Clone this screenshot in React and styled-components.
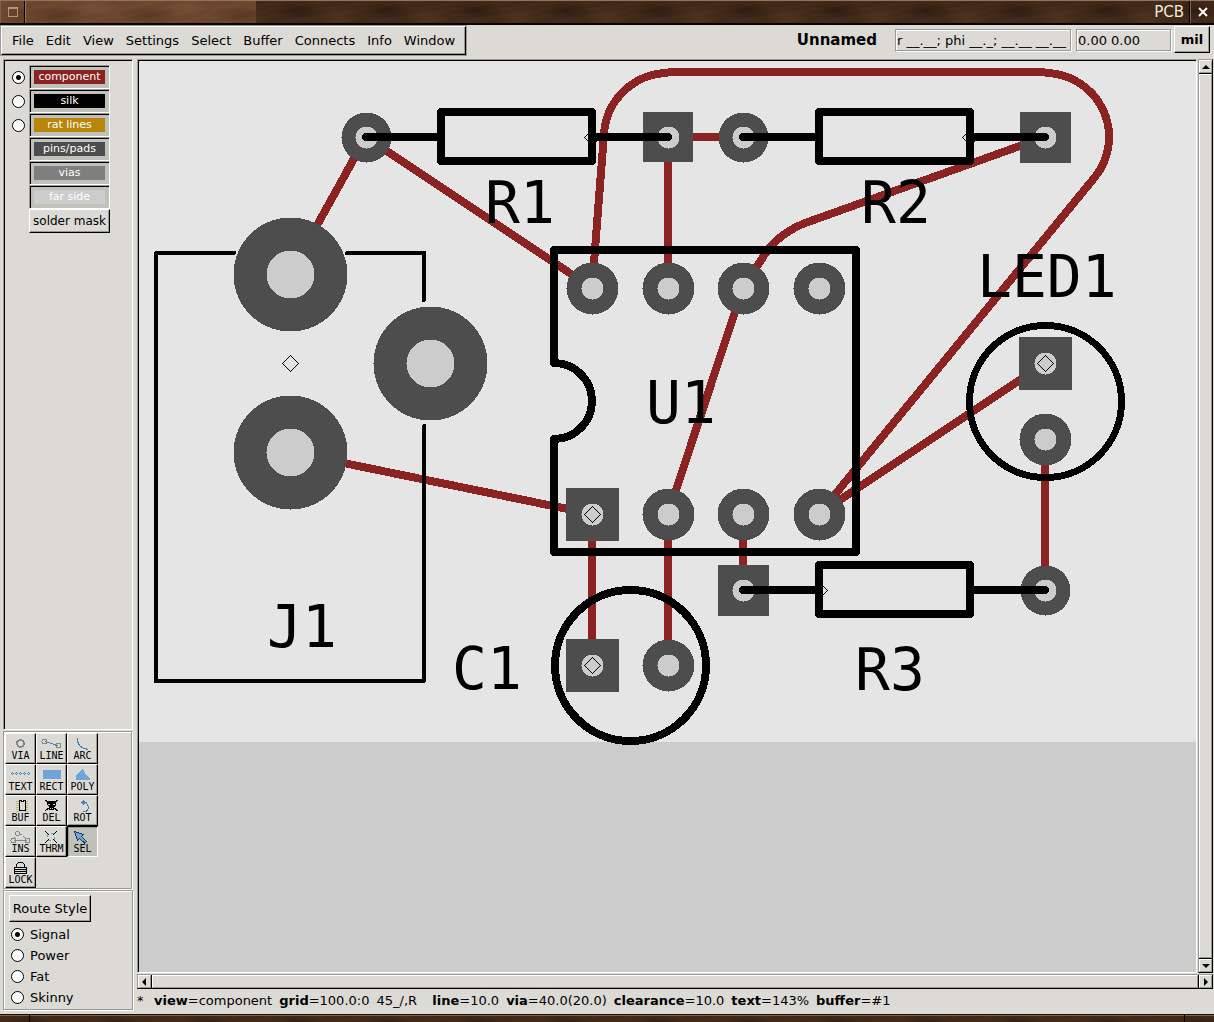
import React, { useState } from "react";
import styled, { createGlobalStyle, css } from "styled-components";

const face = "#dbdad5";
const shade = "#9a9992";
const copper = "#8b2323";
const pad = "#4d4d4d";
const hole = "#cccccc";

const GlobalStyle = createGlobalStyle`
  * { box-sizing: border-box; }
  body { margin: 0; background: ${face}; }
  button, input, output { font: inherit; color: inherit; }
`;

const raised = css`
  border: 1px solid;
  border-color: #fff #000 #000 #fff;
  box-shadow: inset -1px -1px 0 ${shade};
  background: ${face};
`;

const etched = css`
  border: 1px solid ${shade};
  box-shadow: inset 1px 1px 0 #fff, 1px 1px 0 #fff;
`;

const Window = styled.div`
  display: flex;
  flex-direction: column;
  height: 100vh;
  min-height: 640px;
  background: ${face};
  color: #000;
  font: 13px/16px "DejaVu Sans", sans-serif;
`;

const woodDark = css`
  background-color: #402919;
  background-image:
    radial-gradient(ellipse 26px 9px at 30% 40%, rgba(18, 9, 5, 0.4), transparent),
    radial-gradient(ellipse 22px 12px at 75% 70%, rgba(105, 66, 36, 0.35), transparent),
    repeating-linear-gradient(172deg, rgba(90, 56, 30, 0.15) 0 2px, transparent 3px 7px);
  background-size: 90px 24px;
`;

const woodLight = css`
  background-color: #6b452e;
  background-image:
    radial-gradient(ellipse 30px 10px at 35% 60%, rgba(54, 30, 18, 0.35), transparent),
    radial-gradient(ellipse 24px 9px at 75% 30%, rgba(140, 98, 66, 0.3), transparent),
    repeating-linear-gradient(168deg, rgba(130, 88, 58, 0.15) 0 2px, transparent 3px 8px);
  background-size: 92px 24px;
`;

const TitleBar = styled.header`
  display: flex;
  flex: none;
  height: 25px;
  border-top: 1px solid #94735a;
  border-bottom: 2px solid #080403;
  ${woodDark}
`;

const TitleButton = styled.button`
  display: grid;
  place-items: center;
  width: 24px;
  padding: 0;
  border: 0;
  border-left: 1px solid #80604a;
  ${(p) => (p.$light ? woodLight : "background: transparent;")}
`;

const TitleGrip = styled.div`
  width: 232px;
  border-left: 1px solid #000;
  box-shadow: inset 1px 0 0 #94735a;
  ${woodLight}
`;

const TitleText = styled.h1`
  flex: 1;
  margin: 0;
  padding-right: 5px;
  border-right: 1px solid #000;
  color: #f4e6d8;
  font-size: 15px;
  font-weight: 400;
  line-height: 23px;
  text-align: right;
`;

const Header = styled.div`
  display: flex;
  flex: none;
  align-items: flex-start;
  height: 34px;
  padding: 1px 4px 0 1px;
`;

const MenuBar = styled.nav`
  display: flex;
  flex: none;
  height: 29px;
  padding: 0 4px;
  ${raised}
  outline: 1px solid ${shade};
`;

const MenuItem = styled.button`
  padding: 0 6px;
  border: 0;
  background: transparent;
`;

const BoardName = styled.h2`
  flex: 1;
  margin: 0;
  padding-right: 14px;
  font-size: 15px;
  font-weight: 700;
  line-height: 29px;
  text-align: right;
`;

const Readout = styled.output`
  width: ${(p) => p.$width}px;
  height: 23px;
  margin: 3px 0 0 4px;
  padding: 0 1px;
  overflow: hidden;
  white-space: nowrap;
  line-height: 21px;
  border: 1px solid;
  border-color: ${shade} #fff #fff ${shade};
  box-shadow: inset -1px -1px 0 ${shade}, inset 1px 1px 0 #fff;
`;

const UnitButton = styled.button`
  width: 36px;
  height: 27px;
  margin-left: 2px;
  padding: 0;
  font-weight: 700;
  ${raised}
`;

const Body = styled.div`
  display: flex;
  flex: 1;
  min-height: 0;
`;

const Side = styled.aside`
  display: flex;
  flex: none;
  flex-direction: column;
  gap: 1px;
  width: 137px;
  padding: 0 4px 4px 3px;
`;

const LayerPanel = styled.section`
  display: flex;
  flex: 1;
  flex-direction: column;
  min-height: 0;
  padding: 5px 8px;
  border: 1px solid;
  border-color: ${shade} #fff #fff ${shade};
  box-shadow: inset 1px 1px 0 #000;
`;

const LayerRow = styled.div`
  display: flex;
  align-items: center;
  gap: 4px;
  height: 24px;
  padding-left: ${(p) => (p.$bare ? 17 : 0)}px;
`;

const Radio = styled.input.attrs({ type: "radio" })`
  appearance: none;
  flex: none;
  width: 13px;
  height: 13px;
  margin: 0;
  border: 1px solid #000;
  border-radius: 50%;
  background: #fff;
  &:checked {
    background: radial-gradient(circle, #000 0 2px, #fff 3px);
  }
`;

const LayerButton = styled.button`
  width: 81px;
  height: 24px;
  padding: 4px;
  border: 1px solid;
  border-color: ${shade} #fff #fff ${shade};
  box-shadow: inset 1px 1px 0 #000;
  background: #c1c1bb;
  font-size: 11px;
`;

const Swatch = styled.span`
  display: block;
  height: 14px;
  line-height: 14px;
  color: #fff;
  background: ${(p) => p.$color};
`;

const MaskButton = styled.button`
  width: 81px;
  height: 24px;
  padding: 0;
  font-size: 12px;
  white-space: nowrap;
  ${raised}
`;

const ToolPanel = styled.section`
  display: grid;
  flex: none;
  grid-template-columns: repeat(3, 31px);
  grid-auto-rows: 31px;
  width: 129px;
  padding: 1px 1px 0;
  ${etched}
`;

const ToolButton = styled.button`
  display: flex;
  flex-direction: column;
  align-items: center;
  padding: 1px 0 0;
  font: 10px/10px "DejaVu Sans Mono", monospace;
  ${raised}
  ${(p) =>
    p.$active &&
    css`
      border-color: #000 #fff #fff #000;
      box-shadow: inset 1px 1px 0 ${shade};
      background: #c1c1bb;
    `}
`;

const ToolIcon = styled.svg`
  display: block;
  flex: none;
  width: 29px;
  height: 16px;
  overflow: visible;
  fill: none;
  shape-rendering: crispEdges;
`;

const RoutePanel = styled.section`
  flex: none;
  padding: 4px 5px 1px;
  ${etched}
`;

const RouteButton = styled.button`
  display: block;
  width: 82px;
  height: 27px;
  margin-bottom: 2px;
  padding: 0;
  white-space: nowrap;
  ${raised}
`;

const RouteOption = styled.label`
  display: flex;
  align-items: center;
  gap: 6px;
  height: 21px;
  padding-left: 2px;
`;

const Main = styled.main`
  display: flex;
  flex: 1;
  flex-direction: column;
  min-width: 0;
`;

const View = styled.div`
  display: grid;
  flex: 1;
  grid-template: minmax(0, 1fr) 15px / minmax(0, 1fr) 15px;
  gap: 1px;
  min-height: 0;
  padding-right: 1px;
`;

const Canvas = styled.div`
  overflow: hidden;
  min-height: 0;
  border: 1px solid;
  border-color: ${shade} #fff #fff ${shade};
  box-shadow: inset 1px 1px 0 #000;
  padding: 1px 0 0 1px;
`;

const Board = styled.svg`
  display: block;
  width: 100%;
  height: 100%;
  background: ${hole};
  shape-rendering: crispEdges;
`;

const SilkText = styled.text`
  font: 58px "DejaVu Sans Mono", monospace;
  fill: #000;
`;

const ScrollTrack = styled.div`
  display: flex;
  flex-direction: ${(p) => (p.$vertical ? "column" : "row")};
  grid-column: ${(p) => (p.$vertical ? "auto" : "1 / -1")};
  border: 1px solid;
  border-color: ${shade} #000 #000 ${shade};
`;

const ScrollArrow = styled.button`
  display: grid;
  flex: none;
  place-items: center;
  width: 13px;
  height: 13px;
  padding: 0;
  ${raised}
  border-right-color: ${shade};
  border-bottom-color: ${shade};
  box-shadow: none;
`;

const ScrollThumb = styled.div`
  flex: 1;
  border: 1px solid;
  border-color: #fff ${shade} ${shade} #fff;
  margin: ${(p) => (p.$vertical ? "1px 0" : "0 1px")};
  outline: 1px solid #000;
  clip-path: ${(p) => (p.$vertical ? "inset(-1px 0)" : "inset(0 -1px)")};
`;

const StatusBar = styled.footer`
  display: flex;
  flex: none;
  gap: 7px;
  height: 25px;
  padding-bottom: 2px;
  align-items: center;
  white-space: pre;
`;

const StatusMark = styled.span`
  width: 10px;
`;

const Frame = styled.div`
  display: flex;
  flex: none;
  justify-content: space-between;
  height: 8px;
  border-top: 1px solid #1c0d08;
  box-shadow: inset 0 1px 0 #80604a;
  ${woodDark}
`;

const FrameCorner = styled.div`
  width: 30px;
  border: solid #000;
  border-width: 0 ${(p) => (p.$left ? 1 : 0)}px 0 ${(p) => (p.$left ? 0 : 1)}px;
`;

const menus = ["File", "Edit", "View", "Settings", "Select", "Buffer", "Connects", "Info", "Window"];

const layers = [
  { name: "component", color: "#8b2323", radio: true },
  { name: "silk", color: "#000000", radio: true },
  { name: "rat lines", color: "#b8860b", radio: true },
  { name: "pins/pads", color: "#4d4d4d" },
  { name: "vias", color: "#7f7f7f" },
  { name: "far side", color: "#cccccc" },
];

const blue = "#3f80bb";
const sky = "#6fa5d9";
const grey = "#7e8a87";

const tools = [
  ["VIA", <circle key="i" cx="14.5" cy="8.5" r="3.5" stroke={grey} strokeWidth="2" />],
  [
    "LINE",
    <g key="i">
      <circle cx="7.5" cy="6.5" r="2.5" stroke={grey} />
      <circle cx="21.5" cy="10.5" r="2.5" stroke={grey} />
      <path d="M8 6.5L21 10.5" stroke={blue} />
    </g>,
  ],
  ["ARC", <path key="i" d="M9.5 3v3q1 7 11 8.500" stroke={blue} />],
  [
    "TEXT",
    <g key="i" fill={blue}>
      {[6, 10, 14, 18, 22].map((x) => (
        <path key={x} d={`M${x} 6h1v1h-1zM${x - 1} 7h1v1h-1zM${x + 1} 7h1v1h-1zM${x} 8h1v1h-1z`} />
      ))}
    </g>,
  ],
  ["RECT", <rect key="i" x="6" y="4" width="18" height="9" fill={sky} />],
  ["POLY", <path key="i" d="M8 10L14 3H15L17 7L18 9L22 13V14H8Z" fill={sky} />],
  [
    "BUF",
    <g key="i">
      <path d="M11.500 4v11M20.500 4v11" stroke="#c9b47e" strokeDasharray="1 1" strokeWidth="3" />
      <path d="M13.500 3.500h2v1h2v-1h2v10h-6z" stroke="#000" fill={face} />
    </g>,
  ],
  [
    "DEL",
    <g key="i">
      <path d="M8 3L12 6M21 3L17 6M8 14L12 11M21 14L17 11" stroke="#000" />
      <path d="M11 4h7l1 1v3l-2 2v3h-5v-3l-2-2v-3z" fill="#000" />
      <path d="M11 7h2v1h-2zM16 7h2v1h-2zM13 11h1v1h-1zM15 11h1v1h-1z" fill={face} />
    </g>,
  ],
  [
    "ROT",
    <g key="i">
      <path d="M14 5.500h4q3 3 2 7l-2 2h-3" stroke={blue} />
      <path d="M13 5h5v1h-5zM15 3h1v5h-1zM14 4h1v3h-1zM16 4h1v3h-1z" fill={blue} />
    </g>,
  ],
  [
    "INS",
    <g key="i" stroke={grey}>
      <circle cx="11.500" cy="5.500" r="2" />
      <path d="M8 10l2-2M14 6l7 5" strokeDasharray="2 2" />
      <circle cx="7.500" cy="12.500" r="2.500" />
      <circle cx="21.500" cy="12.500" r="2.500" />
      <path d="M8 12.500h13" />
    </g>,
  ],
  [
    "THRM",
    <g key="i">
      <path d="M8 3l4 4M20 3l-4 4M8 15l4-4M20 15l-4-4" stroke="#000" />
      <circle cx="14" cy="9" r="4" stroke="#57b894" strokeDasharray="3 3" />
    </g>,
  ],
  ["SEL", <path key="i" d="M6.500 3.500L15.500 6.500L13.500 8.500L18.500 13.500L16.500 15L11.500 10.500L9.500 12.500Z" fill={sky} stroke="#123c62" />],
  [
    "LOCK",
    <g key="i" stroke="#000">
      <path d="M10.500 8V5.500L12.500 3.500H16.500L18.500 5.500V8" />
      <path d="M8.500 8.500h12v6h-12zM8 10.500h13M8 12.500h13" />
    </g>,
  ],
];

const roundPads = [
  [592, 288, 26], [668, 288, 26], [743, 288, 26], [819, 288, 26],
  [668, 514, 26], [743, 514, 26], [819, 514, 26], [668, 665, 26], [1045, 439, 26],
  [366, 137, 25], [743, 137, 25], [1045, 590, 25],
];

const squarePads = [
  [592, 514, 53], [592, 665, 53], [1045, 363, 53],
  [668, 137, 50], [1045, 137, 51], [743, 590, 51],
];

const jackPads = [[290, 274], [430, 363], [290, 452]];

const traces = [
  "M290 274L366 137L592 288",
  "M592 288L604 134A65 65 0 0 1 668 73",
  "M668 72H1045",
  "M1045 73A64 64 0 0 1 1095 177L819 514L1045 363",
  "M668 288V137H743",
  "M1045 137L808 222Q780 232 765 254L743 288L668 514V665",
  "M290 452L592 514V665",
  "M743 514V590",
  "M1045 439V590",
];

const labels = [
  ["R1", 485, 223], ["R2", 861, 223], ["R3", 855, 690], ["LED1", 977, 297],
  ["U1", 646, 423], ["J1", 267, 647], ["C1", 452, 689],
];

const diamonds = [[290, 363], [592, 514], [592, 665], [1045, 363], [592, 137], [970, 137], [819, 590]];

function BoardDrawing() {
  return (
    <Board role="img" aria-label="Board layout">
      <rect width="100%" height="681" fill="#e5e5e5" />
      <g transform="translate(-139 -61)">
        <g fill="none" stroke={copper} strokeWidth="8">
          {traces.map((d) => <path key={d} d={d} />)}
        </g>
        {squarePads.map(([x, y, s]) => (
          <rect key={`${x}-${y}`} x={Math.floor(x + 0.5 - s / 2)} y={Math.floor(y + 0.5 - s / 2)} width={s} height={s} fill={pad} />
        ))}
        {roundPads.map(([x, y, r]) => <circle key={`${x}-${y}`} cx={x + 0.5} cy={y + 0.5} r={r} fill={pad} />)}
        {[...roundPads, ...squarePads].map(([x, y]) => (
          <circle key={`${x}-${y}`} cx={x + 0.5} cy={y + 0.5} r="11" fill={hole} />
        ))}
        {jackPads.map(([x, y]) => (
          <g key={`${x}-${y}`}>
            <circle cx={x + 0.5} cy={y + 0.5} r="57" fill={pad} />
            <circle cx={x + 0.5} cy={y + 0.5} r="24" fill={hole} />
          </g>
        ))}
        <g fill="none" stroke="#000">
          {diamonds.map(([x, y]) => (
            <path key={`${x}-${y}`} d={`M${x + 0.5} ${y - 7.5}l8 8l-8 8l-8 -8z`} />
          ))}
        </g>
        <g fill="none" stroke="#000" strokeLinecap="round" strokeLinejoin="round">
          <g strokeWidth="8">
            <path d="M441 112H592V161H441ZM366 137H441M592 137H668" />
            <path d="M819 112H970V161H819ZM743 137H819M970 137H1045" />
            <path d="M819 565H970V614H819ZM743 590H819M970 590H1045" />
            <path d="M554 250H856V552H554V439A38 38 0 0 0 554 363Z" />
            <circle cx="630.5" cy="665.5" r="75.5" />
            <circle cx="1045.5" cy="401.5" r="76" strokeWidth="7" />
          </g>
          <path d="M234 253H156V681H424V426M424 300V253H347" strokeWidth="4" />
        </g>
        {labels.map(([text, x, y]) => <SilkText key={text} x={x} y={y}>{text}</SilkText>)}
      </g>
    </Board>
  );
}

const arrows = { up: "M0 5L4 1L8 5Z", down: "M0 1L4 5L8 1Z", left: "M5 -1L1 3L5 7Z", right: "M2 -1L6 3L2 7Z" };

function Arrow({ to }) {
  return (
    <ScrollArrow aria-label={`Scroll ${to}`}>
      <svg width="8" height="6" overflow="visible"><path d={arrows[to]} fill="#000" /></svg>
    </ScrollArrow>
  );
}

function Scroll({ vertical }) {
  return (
    <ScrollTrack $vertical={vertical}>
      <Arrow to={vertical ? "up" : "left"} />
      <ScrollThumb $vertical={vertical} />
      <Arrow to={vertical ? "down" : "right"} />
    </ScrollTrack>
  );
}

export default function App() {
  const [layer, setLayer] = useState("component");
  const [tool, setTool] = useState("SEL");
  const [route, setRoute] = useState("Signal");
  return (
    <Window>
      <GlobalStyle />
      <TitleBar>
        <TitleButton $light aria-label="Window menu">
          <svg width="10" height="10" fill="none" stroke="#b09672" shapeRendering="crispEdges">
            <path d="M.5 .5h9v9h-9zM0 1.500h10" />
          </svg>
        </TitleButton>
        <TitleGrip />
        <TitleText>PCB</TitleText>
        <TitleButton aria-label="Close">
          <svg width="10" height="10" stroke="#fff8ee" strokeWidth="2"><path d="M1 1L9 9M9 1L1 9" /></svg>
        </TitleButton>
      </TitleBar>
      <Header>
        <MenuBar>{menus.map((m) => <MenuItem key={m}>{m}</MenuItem>)}</MenuBar>
        <BoardName>Unnamed</BoardName>
        <Readout $width={177}>r __.__; phi __._; __.__ __.__</Readout>
        <Readout $width={96}>0.00 0.00</Readout>
        <UnitButton>mil</UnitButton>
      </Header>
      <Body>
        <Side>
          <LayerPanel>
            {layers.map((l) => (
              <LayerRow key={l.name} $bare={!l.radio}>
                {l.radio && (
                  <Radio name="layer" aria-label={l.name} checked={layer === l.name} onChange={() => setLayer(l.name)} />
                )}
                <LayerButton><Swatch $color={l.color}>{l.name}</Swatch></LayerButton>
              </LayerRow>
            ))}
            <LayerRow $bare><MaskButton>solder mask</MaskButton></LayerRow>
          </LayerPanel>
          <ToolPanel>
            {tools.map(([name, icon]) => (
              <ToolButton key={name} $active={tool === name} onClick={() => setTool(name)}>
                <ToolIcon>{icon}</ToolIcon>
                {name}
              </ToolButton>
            ))}
          </ToolPanel>
          <RoutePanel>
            <RouteButton>Route Style</RouteButton>
            {["Signal", "Power", "Fat", "Skinny"].map((r) => (
              <RouteOption key={r}>
                <Radio name="route" checked={route === r} onChange={() => setRoute(r)} />
                {r}
              </RouteOption>
            ))}
          </RoutePanel>
        </Side>
        <Main>
          <View>
            <Canvas><BoardDrawing /></Canvas>
            <Scroll vertical />
            <Scroll />
          </View>
          <StatusBar>
            <StatusMark>*</StatusMark>
            <span><b>view</b>=component</span>
            <span><b>grid</b>=100.0:0</span>
            <span>{"45_/,R  "}</span>
            <span><b>line</b>=10.0</span>
            <span><b>via</b>=40.0(20.0)</span>
            <span><b>clearance</b>=10.0</span>
            <span><b>text</b>=143%</span>
            <span><b>buffer</b>=#1</span>
          </StatusBar>
        </Main>
      </Body>
      <Frame><FrameCorner $left /><FrameCorner /></Frame>
    </Window>
  );
}
